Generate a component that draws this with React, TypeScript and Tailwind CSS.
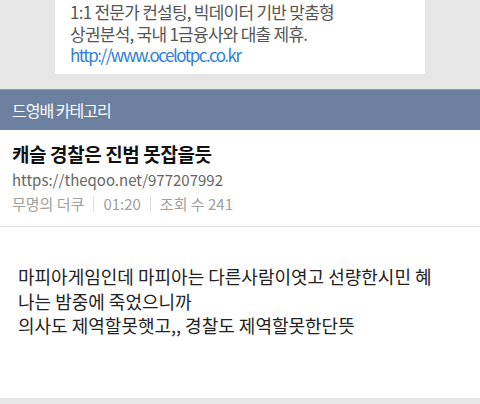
export default function App() {
  const ko = { fontFamily: '"Noto Sans CJK KR", "Noto Sans", sans-serif' };

  return (
    <div className="w-[480px] h-[404px] overflow-hidden bg-white" style={ko}>
      {/* Ad banner */}
      <div className="bg-[#e6e6e6] h-[89px] px-[55px]">
        <div className="bg-white h-[74px] pl-[15px] pt-[1px] text-[17px] leading-[21.5px] tracking-[-0.75px] text-[#555]">
          <p className="whitespace-nowrap">1:1 전문가 컨설팅, 빅데이터 기반 맞춤형</p>
          <p className="whitespace-nowrap">상권분석, 국내 1금융사와 대출 제휴.</p>
          <p className="whitespace-nowrap tracking-[-1.5px] text-[#2f7fd8]">http://www.ocelotpc.co.kr</p>
        </div>
      </div>

      {/* Category bar */}
      <div className="h-[41px] bg-[#6a809e] border-t border-[#8a98aa] flex items-center px-[12px] text-[16px] tracking-[-1px] text-white">
        드영배 카테고리
      </div>

      {/* Post header */}
      <div className="px-[12px] pt-[11px] pb-[10px] border-b border-[#e2e2e2]">
        <h1 className="text-[19px] font-bold leading-[26px] tracking-[-0.4px] text-[#111]">
          캐슬 경찰은 진범 못잡을듯
        </h1>
        <div className="text-[15px] leading-[24px] text-[#666] mt-[1px]">
          https://theqoo.net/977207992
        </div>
        <div className="flex items-center text-[15px] leading-[24px] text-[#a0a0a0]">
          <span>무명의 더쿠</span>
          <span className="mx-[9px] h-[16px] w-px bg-[#ddd]" />
          <span>01:20</span>
          <span className="mx-[9px] h-[16px] w-px bg-[#ddd]" />
          <span>조회 수 241</span>
        </div>
      </div>

      {/* Post body */}
      <div className="h-[171px] px-[18px] pt-[37px] text-[18px] leading-[24.5px] text-[#222]">
        <p className="whitespace-nowrap">마피아게임인데 마피아는 다른사람이엿고 선량한시민 혜</p>
        <p className="whitespace-nowrap">나는 밤중에 죽었으니까</p>
        <p className="whitespace-nowrap">의사도 제역할못햇고,, 경찰도 제역할못한단뜻</p>
      </div>

      <div className="h-[10px] bg-[#e6e6e6]" />
    </div>
  );
}
